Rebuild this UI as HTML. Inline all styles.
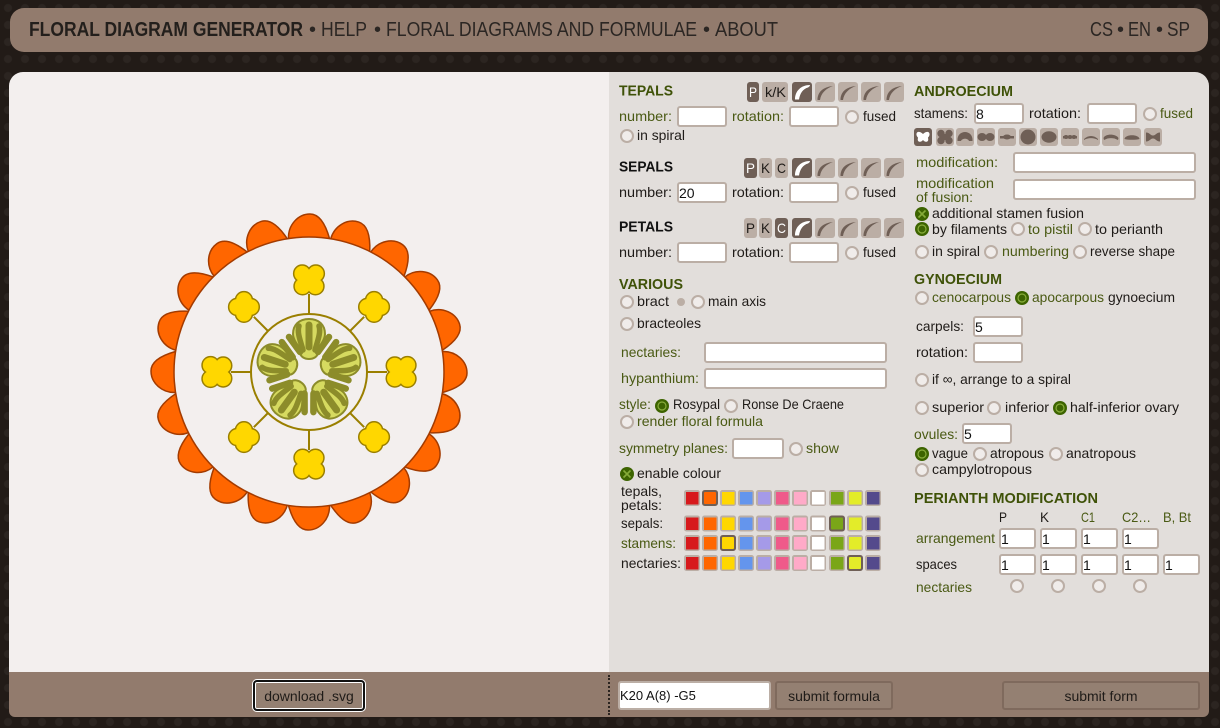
<!DOCTYPE html>
<html><head><meta charset="utf-8"><title>Floral Diagram Generator</title>
<style>
html,body{margin:0;padding:0;width:1220px;height:728px;overflow:hidden;background-color:#221b17;background-image:radial-gradient(circle at 8px 8px,#2c2521 0,#2c2521 3.5px,transparent 4.5px);background-size:17px 17px;}
.b{position:absolute}
svg{position:absolute;left:0;top:0}
svg text{font-family:"Liberation Sans",sans-serif;font-size:14px;fill:#1f1b18}
svg text.o{fill:#4a5a14}
svg text.h{font-size:15px;font-weight:bold;fill:#3f5208}
svg text.k{font-size:15px;font-weight:bold;fill:#111}
svg text.n{font-size:20px;fill:#2b2623}
svg text.nb{font-size:20px;font-weight:bold;fill:#231f1c}
input{position:absolute;box-sizing:border-box;height:21px;border:2px solid #bbaea5;border-radius:3px;background:#fff;padding:0;margin:0;font:14px "Liberation Sans",sans-serif;color:#111;outline:none}
button{position:absolute;box-sizing:border-box;background:#948072;border:2px solid #7f6a5d;border-radius:3px;height:29px;top:681px;font:14px "Liberation Sans",sans-serif;color:#1f1b18;padding:0}
</style></head><body>
<div class="b" style="left:10px;top:8px;width:1198px;height:44px;background:#927b6d;border-radius:14px"></div>
<div class="b" style="left:9px;top:72px;width:600px;height:600px;background:#f3efee;border-radius:14px 0 0 0"></div>
<div class="b" style="left:609px;top:72px;width:600px;height:600px;background:#e2dedb;border-radius:0 14px 0 0"></div>
<div class="b" style="left:9px;top:672px;width:1200px;height:45px;background:#927b6d;border-radius:0 0 6px 6px"></div>
<div class="b" style="left:608px;top:675px;height:40px;border-left:2px dotted #2b2420"></div>

<svg width="1220" height="728" viewBox="0 0 1220 728" xmlns="http://www.w3.org/2000/svg">
<defs>
<g id="r"><circle r="6" fill="#f0ecea" stroke="#bbaea5" stroke-width="2"/></g>
<g id="on"><circle r="7" fill="#3d6400"/><circle r="4.6" fill="#8aae3c"/><circle r="3.4" fill="#3d6400"/></g>
<g id="x"><circle r="7" fill="#3d6400"/><path d="M-3.5-3.5L3.5 3.5M3.5-3.5L-3.5 3.5" stroke="#86ab38" stroke-width="1.6"/></g>
<path id="pt" d="M-20.500-133.500C-21-147-11-158 1-158C11-158 17-146 20.500-133.500Z" fill="#ff6600" stroke="#a33b00" stroke-width="1.5"/>
<g id="an"><g fill="#9a7f00" stroke="#9a7f00" stroke-width="3"><circle cx="-6.8" cy="-6.4" r="7.8"/><circle cx="6.8" cy="-6.4" r="7.8"/><circle cx="-6.4" cy="6.2" r="7.8"/><circle cx="6.4" cy="6.2" r="7.8"/></g><g fill="#ffd700"><circle cx="-6.8" cy="-6.4" r="7.8"/><circle cx="6.8" cy="-6.4" r="7.8"/><circle cx="-6.4" cy="6.2" r="7.8"/><circle cx="6.4" cy="6.2" r="7.8"/><rect x="-6" y="-6" width="12" height="12"/></g></g>
<g id="an2"><g fill="#9a7f00" stroke="#9a7f00" stroke-width="3"><circle cx="-4.8" cy="-4.8" r="7.8"/><circle cx="4.8" cy="-4.8" r="7.8"/><circle cx="-4.8" cy="4.8" r="7.8"/><circle cx="4.8" cy="4.8" r="7.8"/></g><g fill="#ffd700"><circle cx="-4.8" cy="-4.8" r="7.8"/><circle cx="4.8" cy="-4.8" r="7.8"/><circle cx="-4.8" cy="4.8" r="7.8"/><circle cx="4.8" cy="4.8" r="7.8"/></g></g>
<g id="sg"><path d="M0-78V-58" stroke="#9a7f00" stroke-width="2"/><use href="#an" y="-92"/></g>
<g id="sd"><path d="M0-78V-58" stroke="#9a7f00" stroke-width="2"/><use href="#an2" y="-92"/></g>
<g id="cp">
<path d="M0-53C10-53 16-47 16-38C16-31 10-27 9-20C9-15 4-13 0-13C-4-13-9-15-9-20C-10-27-16-31-16-38C-16-47-10-53 0-53Z" fill="#d6da60" stroke="#8c8c2a" stroke-width="2"/>
<g fill="none" stroke="#8c8c2a" stroke-linecap="round">
<path d="M-20-35L-9-20" stroke-width="6.5"/><path d="M20-35L9-20" stroke-width="6.5"/>
<path d="M0-47V-25" stroke-width="7"/><path d="M-10-46C-12-40-9-32-6-22" stroke-width="5.5"/><path d="M10-46C12-40 9-32 6-22" stroke-width="5.5"/>
</g></g>
<rect id="s" x="0" y="0" width="16" height="16" rx="2.5" fill="#bbaea5"/>
<path id="c1" d="M2.5 18C2.500 10 8 5 18 4C11 6.500 6 11 5 18Z" fill="#6f5f56"/>
<path id="c0" d="M3 17.5C3 9 9 3 18 3C18 4 17 5 16 5.500C11 7 8 11 7 17.500Z" fill="#fff"/>
<rect id="btn" width="20" height="20" rx="3" fill="#bbaea5"/>
<g id="cs"><use href="#btn"/><use href="#c1"/></g>
<g id="csel"><rect width="20" height="20" rx="3" fill="#6f5f56"/><use href="#c0"/></g>
<g id="row"><use href="#csel" x="792"/><use href="#cs" x="815"/><use href="#cs" x="838"/><use href="#cs" x="861"/><use href="#cs" x="884"/></g>
<g id="sw"><use href="#s" x="684"/><use href="#s" x="702"/><use href="#s" x="720"/><use href="#s" x="738"/><use href="#s" x="756"/><use href="#s" x="774"/><use href="#s" x="792"/><use href="#s" x="810"/><use href="#s" x="829"/><use href="#s" x="847"/><use href="#s" x="865"/>
<rect x="686" y="2" width="12.5" height="12.5" fill="#d7191c"/><rect x="704" y="2" width="12.5" height="12.5" fill="#ff6600"/><rect x="722" y="2" width="12.5" height="12.5" fill="#ffd700"/><rect x="740" y="2" width="12.5" height="12.5" fill="#6495ed"/><rect x="758" y="2" width="12.5" height="12.5" fill="#a59ae8"/><rect x="776" y="2" width="12.5" height="12.5" fill="#ef5a8a"/><rect x="794" y="2" width="12.5" height="12.5" fill="#ffaac8"/><rect x="812" y="2" width="12.5" height="12.5" fill="#fff"/><rect x="831" y="2" width="12.5" height="12.5" fill="#7aa618"/><rect x="849" y="2" width="12.5" height="12.5" fill="#e3ec29"/><rect x="867" y="2" width="12.5" height="12.5" fill="#544a8c"/></g>
</defs>

<!-- header -->
<text class="nb" x="29" y="36" textLength="274" lengthAdjust="spacingAndGlyphs">FLORAL DIAGRAM GENERATOR</text>
<text class="n" x="309" y="36">•</text>
<text class="n" x="321" y="36" textLength="46" lengthAdjust="spacingAndGlyphs">HELP</text>
<text class="n" x="374" y="36">•</text>
<text class="n" x="386" y="36" textLength="311" lengthAdjust="spacingAndGlyphs">FLORAL DIAGRAMS AND FORMULAE</text>
<text class="n" x="703" y="36">•</text>
<text class="n" x="715" y="36" textLength="63" lengthAdjust="spacingAndGlyphs">ABOUT</text>
<text class="n" x="1090" y="36" textLength="23" lengthAdjust="spacingAndGlyphs">CS</text>
<text class="n" x="1117" y="36">•</text>
<text class="n" x="1128" y="36" textLength="23" lengthAdjust="spacingAndGlyphs">EN</text>
<text class="n" x="1156" y="36">•</text>
<text class="n" x="1167" y="36" textLength="23" lengthAdjust="spacingAndGlyphs">SP</text>

<!-- flower -->
<g transform="translate(309,372)">
<use href="#pt"/><use href="#pt" transform="rotate(18)"/><use href="#pt" transform="rotate(36)"/><use href="#pt" transform="rotate(54)"/><use href="#pt" transform="rotate(72)"/><use href="#pt" transform="rotate(90)"/><use href="#pt" transform="rotate(108)"/><use href="#pt" transform="rotate(126)"/><use href="#pt" transform="rotate(144)"/><use href="#pt" transform="rotate(162)"/><use href="#pt" transform="rotate(180)"/><use href="#pt" transform="rotate(198)"/><use href="#pt" transform="rotate(216)"/><use href="#pt" transform="rotate(234)"/><use href="#pt" transform="rotate(252)"/><use href="#pt" transform="rotate(270)"/><use href="#pt" transform="rotate(288)"/><use href="#pt" transform="rotate(306)"/><use href="#pt" transform="rotate(324)"/><use href="#pt" transform="rotate(342)"/>
<circle r="135" fill="#f3efee" stroke="#a33b00" stroke-width="1.5"/>
<use href="#sg"/><use href="#sd" transform="rotate(45)"/><use href="#sg" transform="rotate(90)"/><use href="#sd" transform="rotate(135)"/><use href="#sg" transform="rotate(180)"/><use href="#sd" transform="rotate(225)"/><use href="#sg" transform="rotate(270)"/><use href="#sd" transform="rotate(315)"/>
<circle r="58" fill="none" stroke="#9a7f00" stroke-width="2"/>
<use href="#cp"/><use href="#cp" transform="rotate(72)"/><use href="#cp" transform="rotate(144)"/><use href="#cp" transform="rotate(216)"/><use href="#cp" transform="rotate(288)"/>
</g>

<!-- tepals -->
<text class="h" x="619" y="95.5" textLength="54" lengthAdjust="spacingAndGlyphs">TEPALS</text>
<g transform="translate(0,82)"><rect x="747" width="12" height="20" rx="3" fill="#6f5f56"/><rect x="762" width="26" height="20" rx="3" fill="#bbaea5"/><use href="#row"/>
<text x="749" y="15" style="fill:#fff" textLength="8" lengthAdjust="spacingAndGlyphs">P</text><text x="765" y="15" textLength="21" lengthAdjust="spacingAndGlyphs">k/K</text></g>
<text class="o" x="619" y="121" textLength="53" lengthAdjust="spacingAndGlyphs">number:</text>
<text class="o" x="732" y="121" textLength="52" lengthAdjust="spacingAndGlyphs">rotation:</text>
<use href="#r" x="852" y="117"/><text x="863" y="121" textLength="33" lengthAdjust="spacingAndGlyphs">fused</text>
<use href="#r" x="627" y="136"/><text x="637" y="140" textLength="48" lengthAdjust="spacingAndGlyphs">in spiral</text>

<!-- sepals -->
<text class="k" x="619" y="171.5" textLength="54" lengthAdjust="spacingAndGlyphs">SEPALS</text>
<g transform="translate(0,158)"><rect x="744" width="13" height="20" rx="3" fill="#6f5f56"/><rect x="759" width="13" height="20" rx="3" fill="#bbaea5"/><rect x="775" width="13" height="20" rx="3" fill="#bbaea5"/><use href="#row"/>
<text x="746" y="15" style="fill:#fff" textLength="9" lengthAdjust="spacingAndGlyphs">P</text><text x="761" y="15" textLength="9" lengthAdjust="spacingAndGlyphs">K</text><text x="777" y="15" textLength="9" lengthAdjust="spacingAndGlyphs">C</text></g>
<text x="619" y="197" textLength="53" lengthAdjust="spacingAndGlyphs">number:</text>
<text x="732" y="197" textLength="52" lengthAdjust="spacingAndGlyphs">rotation:</text>
<use href="#r" x="852" y="193"/><text x="863" y="197" textLength="33" lengthAdjust="spacingAndGlyphs">fused</text>

<!-- petals -->
<text class="k" x="619" y="231.5" textLength="54" lengthAdjust="spacingAndGlyphs">PETALS</text>
<g transform="translate(0,218)"><rect x="744" width="13" height="20" rx="3" fill="#bbaea5"/><rect x="759" width="13" height="20" rx="3" fill="#bbaea5"/><rect x="775" width="13" height="20" rx="3" fill="#6f5f56"/><use href="#row"/>
<text x="746" y="15" textLength="9" lengthAdjust="spacingAndGlyphs">P</text><text x="761" y="15" textLength="9" lengthAdjust="spacingAndGlyphs">K</text><text x="777" y="15" style="fill:#fff" textLength="9" lengthAdjust="spacingAndGlyphs">C</text></g>
<text x="619" y="257" textLength="53" lengthAdjust="spacingAndGlyphs">number:</text>
<text x="732" y="257" textLength="52" lengthAdjust="spacingAndGlyphs">rotation:</text>
<use href="#r" x="852" y="253"/><text x="863" y="257" textLength="33" lengthAdjust="spacingAndGlyphs">fused</text>

<!-- various -->
<text class="h" x="619" y="289" textLength="64" lengthAdjust="spacingAndGlyphs">VARIOUS</text>
<use href="#r" x="627" y="302"/><text x="637" y="306" textLength="32" lengthAdjust="spacingAndGlyphs">bract</text>
<circle cx="681" cy="302" r="4" fill="#bbaea5"/>
<use href="#r" x="698" y="302"/><text x="708" y="306" textLength="58" lengthAdjust="spacingAndGlyphs">main axis</text>
<use href="#r" x="627" y="324"/><text x="637" y="328" textLength="64" lengthAdjust="spacingAndGlyphs">bracteoles</text>
<text class="o" x="621" y="357" textLength="60" lengthAdjust="spacingAndGlyphs">nectaries:</text>
<text class="o" x="621" y="383" textLength="78" lengthAdjust="spacingAndGlyphs">hypanthium:</text>
<text class="o" x="619" y="409" textLength="32" lengthAdjust="spacingAndGlyphs">style:</text>
<use href="#on" x="662" y="406"/><text x="673" y="409" textLength="47" lengthAdjust="spacingAndGlyphs">Rosypal</text>
<use href="#r" x="731" y="406"/><text x="742" y="409" textLength="102" lengthAdjust="spacingAndGlyphs">Ronse De Craene</text>
<use href="#r" x="627" y="422"/><text class="o" x="637" y="426" textLength="126" lengthAdjust="spacingAndGlyphs">render floral formula</text>
<text class="o" x="619" y="453" textLength="109" lengthAdjust="spacingAndGlyphs">symmetry planes:</text>
<use href="#r" x="796" y="449"/><text class="o" x="806" y="453" textLength="33" lengthAdjust="spacingAndGlyphs">show</text>
<use href="#x" x="627" y="474"/><text x="637" y="478" textLength="84" lengthAdjust="spacingAndGlyphs">enable colour</text>
<text x="621" y="496" textLength="41" lengthAdjust="spacingAndGlyphs">tepals,</text>
<text x="621" y="510" textLength="41" lengthAdjust="spacingAndGlyphs">petals:</text>
<text x="621" y="528" textLength="42" lengthAdjust="spacingAndGlyphs">sepals:</text>
<text class="o" x="621" y="548" textLength="55" lengthAdjust="spacingAndGlyphs">stamens:</text>
<text x="621" y="568" textLength="60" lengthAdjust="spacingAndGlyphs">nectaries:</text>
<use href="#sw" y="490"/><use href="#sw" y="515.5"/><use href="#sw" y="535"/><use href="#sw" y="555"/>
<g fill="none" stroke="#6f5f56" stroke-width="2"><rect x="703" y="491" width="14" height="14" rx="2"/><rect x="830" y="516.5" width="14" height="14" rx="2"/><rect x="721" y="536" width="14" height="14" rx="2"/><rect x="848" y="556" width="14" height="14" rx="2"/></g>

<!-- androecium -->
<text class="h" x="914" y="96" textLength="99" lengthAdjust="spacingAndGlyphs">ANDROECIUM</text>
<text x="914" y="118" textLength="54" lengthAdjust="spacingAndGlyphs">stamens:</text>
<text x="1029" y="118" textLength="52" lengthAdjust="spacingAndGlyphs">rotation:</text>
<use href="#r" x="1150" y="114"/><text class="o" x="1160" y="118" textLength="33" lengthAdjust="spacingAndGlyphs">fused</text>
<!-- anther shape buttons -->
<g transform="translate(0,128)">
<rect x="914" width="18" height="18" rx="3" fill="#6f5f56"/>
<path d="M923 6C920 3 916 3 916.500 7C917 9 918 9 918 10C917 13 919 15 922 13L923 12L924 13C927 15 929 13 928 10C928 9 929 9 929.500 7C930 3 926 3 923 6Z" fill="#fff"/>
<g fill="#bbaea5"><rect x="936" width="18" height="18" rx="3"/><rect x="956" width="18" height="18" rx="3"/><rect x="977" width="18" height="18" rx="3"/><rect x="998" width="18" height="18" rx="3"/><rect x="1019" width="18" height="18" rx="3"/><rect x="1040" width="18" height="18" rx="3"/><rect x="1061" width="18" height="18" rx="3"/><rect x="1082" width="18" height="18" rx="3"/><rect x="1102" width="18" height="18" rx="3"/><rect x="1123" width="18" height="18" rx="3"/><rect x="1144" width="18" height="18" rx="3"/></g>
<g fill="#6f5f56">
<circle cx="941" cy="5.500" r="3.700"/><circle cx="949" cy="5.500" r="3.700"/><circle cx="941" cy="12.500" r="3.700"/><circle cx="949" cy="12.500" r="3.700"/><rect x="942" y="6" width="6" height="6"/>
<path d="M957.500 13C957 7 961 4 965 4C969 4 973 7 972.500 13L969 13C968 10 962 10 961 13Z"/>
<ellipse cx="982" cy="9" rx="4.500" ry="4"/><ellipse cx="990" cy="9" rx="4.500" ry="4"/>
<path d="M1000 8H1014V10.500H1000Z"/><ellipse cx="1007" cy="9" rx="4" ry="2.500"/>
<circle cx="1028" cy="9" r="7.500"/>
<ellipse cx="1049" cy="9" rx="7.500" ry="5.700"/>
<path d="M1063 8H1077V10.500H1063Z"/><ellipse cx="1066" cy="9" rx="2.500" ry="2"/><ellipse cx="1070" cy="9" rx="2.500" ry="2"/><ellipse cx="1074" cy="9" rx="2.500" ry="2"/>
<path d="M1084 11C1088 7 1094 7 1098 11L1098 12C1094 9.500 1088 9.500 1084 12Z"/>
<path d="M1103.500 10C1105 5.500 1116 5.500 1118.500 10L1118 12L1114.500 10.500C1112 10 1110 10 1107.500 10.500L1104 12Z"/>
<path d="M1124.500 11C1125 6 1139 6 1139.500 11C1136 12 1128 12 1124.500 11Z"/>
<path d="M1146 4.500C1150 4.500 1150 7.500 1153 7.500C1156 7.500 1156 4.500 1160 4.500L1160 13.500C1156 13.500 1156 10.500 1153 10.500C1150 10.500 1150 13.500 1146 13.500Z"/>
</g></g>
<text class="o" x="916" y="167" textLength="82" lengthAdjust="spacingAndGlyphs">modification:</text>
<text class="o" x="916" y="188" textLength="78" lengthAdjust="spacingAndGlyphs">modification</text>
<text class="o" x="916" y="202" textLength="57" lengthAdjust="spacingAndGlyphs">of fusion:</text>
<use href="#x" x="922" y="214"/><text x="932" y="218" textLength="152" lengthAdjust="spacingAndGlyphs">additional stamen fusion</text>
<use href="#on" x="922" y="229"/><text x="932" y="234" textLength="75" lengthAdjust="spacingAndGlyphs">by filaments</text>
<use href="#r" x="1018" y="229"/><text class="o" x="1028" y="234" textLength="45" lengthAdjust="spacingAndGlyphs">to pistil</text>
<use href="#r" x="1085" y="229"/><text x="1095" y="234" textLength="68" lengthAdjust="spacingAndGlyphs">to perianth</text>
<use href="#r" x="922" y="252"/><text x="932" y="256" textLength="48" lengthAdjust="spacingAndGlyphs">in spiral</text>
<use href="#r" x="991" y="252"/><text class="o" x="1002" y="256" textLength="67" lengthAdjust="spacingAndGlyphs">numbering</text>
<use href="#r" x="1080" y="252"/><text x="1090" y="256" textLength="85" lengthAdjust="spacingAndGlyphs">reverse shape</text>

<!-- gynoecium -->
<text class="h" x="914" y="284" textLength="88" lengthAdjust="spacingAndGlyphs">GYNOECIUM</text>
<use href="#r" x="922" y="298"/><text class="o" x="932" y="302" textLength="79" lengthAdjust="spacingAndGlyphs">cenocarpous</text>
<use href="#on" x="1022" y="298"/><text class="o" x="1032" y="302" textLength="72" lengthAdjust="spacingAndGlyphs">apocarpous</text>
<text x="1108" y="302" textLength="67" lengthAdjust="spacingAndGlyphs">gynoecium</text>
<text x="916" y="331" textLength="48" lengthAdjust="spacingAndGlyphs">carpels:</text>
<text x="916" y="357" textLength="52" lengthAdjust="spacingAndGlyphs">rotation:</text>
<use href="#r" x="922" y="380"/><text x="932" y="384" textLength="139" lengthAdjust="spacingAndGlyphs">if ∞, arrange to a spiral</text>
<use href="#r" x="922" y="408"/><text x="932" y="412" textLength="52" lengthAdjust="spacingAndGlyphs">superior</text>
<use href="#r" x="994" y="408"/><text x="1005" y="412" textLength="44" lengthAdjust="spacingAndGlyphs">inferior</text>
<use href="#on" x="1060" y="408"/><text x="1070" y="412" textLength="109" lengthAdjust="spacingAndGlyphs">half-inferior ovary</text>
<text class="o" x="914" y="439" textLength="44" lengthAdjust="spacingAndGlyphs">ovules:</text>
<use href="#on" x="922" y="454"/><text x="932" y="458" textLength="36" lengthAdjust="spacingAndGlyphs">vague</text>
<use href="#r" x="980" y="454"/><text x="990" y="458" textLength="54" lengthAdjust="spacingAndGlyphs">atropous</text>
<use href="#r" x="1056" y="454"/><text x="1066" y="458" textLength="70" lengthAdjust="spacingAndGlyphs">anatropous</text>
<use href="#r" x="922" y="470"/><text x="932" y="474" textLength="100" lengthAdjust="spacingAndGlyphs">campylotropous</text>

<!-- perianth modification -->
<text class="h" x="914" y="503" textLength="184" lengthAdjust="spacingAndGlyphs">PERIANTH MODIFICATION</text>
<text x="999" y="522" textLength="8" lengthAdjust="spacingAndGlyphs">P</text>
<text x="1040" y="522" textLength="9" lengthAdjust="spacingAndGlyphs">K</text>
<text class="o" x="1081" y="522" textLength="14" lengthAdjust="spacingAndGlyphs">C1</text>
<text class="o" x="1122" y="522" textLength="29" lengthAdjust="spacingAndGlyphs">C2…</text>
<text class="o" x="1163" y="522" textLength="28" lengthAdjust="spacingAndGlyphs">B, Bt</text>
<text class="o" x="916" y="543" textLength="79" lengthAdjust="spacingAndGlyphs">arrangement</text>
<text x="916" y="569" textLength="41" lengthAdjust="spacingAndGlyphs">spaces</text>
<text class="o" x="916" y="592" textLength="56" lengthAdjust="spacingAndGlyphs">nectaries</text>
<use href="#r" x="1017" y="586"/><use href="#r" x="1058" y="586"/><use href="#r" x="1099" y="586"/><use href="#r" x="1140" y="586"/>
</svg>

<input style="left:677px;top:106px;width:50px">
<input style="left:789px;top:106px;width:50px">
<input style="left:677px;top:182px;width:50px" value="20">
<input style="left:789px;top:182px;width:50px">
<input style="left:677px;top:242px;width:50px">
<input style="left:789px;top:242px;width:50px">
<input style="left:704px;top:342px;width:183px">
<input style="left:704px;top:368px;width:183px">
<input style="left:732px;top:438px;width:52px">
<input style="left:974px;top:103px;width:50px" value="8">
<input style="left:1087px;top:103px;width:50px">
<input style="left:1013px;top:152px;width:183px">
<input style="left:1013px;top:179px;width:183px">
<input style="left:973px;top:316px;width:50px" value="5">
<input style="left:973px;top:342px;width:50px">
<input style="left:962px;top:423px;width:50px" value="5">
<input style="left:999px;top:528px;width:37px" value="1">
<input style="left:1040px;top:528px;width:37px" value="1">
<input style="left:1081px;top:528px;width:37px" value="1">
<input style="left:1122px;top:528px;width:37px" value="1">
<input style="left:999px;top:554px;width:37px" value="1">
<input style="left:1040px;top:554px;width:37px" value="1">
<input style="left:1081px;top:554px;width:37px" value="1">
<input style="left:1122px;top:554px;width:37px" value="1">
<input style="left:1163px;top:554px;width:37px" value="1">
<input style="left:618px;top:681px;width:153px;height:29px;font-size:13px" value="K20 A(8) -G5">
<button style="left:253px;top:680px;width:112px;height:31px;border:2px solid #111;border-radius:4px;box-shadow:0 0 0 1px #fff inset,0 0 0 1px #fff">download .svg</button>
<button style="left:775px;width:118px">submit formula</button>
<button style="left:1002px;width:198px">submit form</button>
</body></html>
